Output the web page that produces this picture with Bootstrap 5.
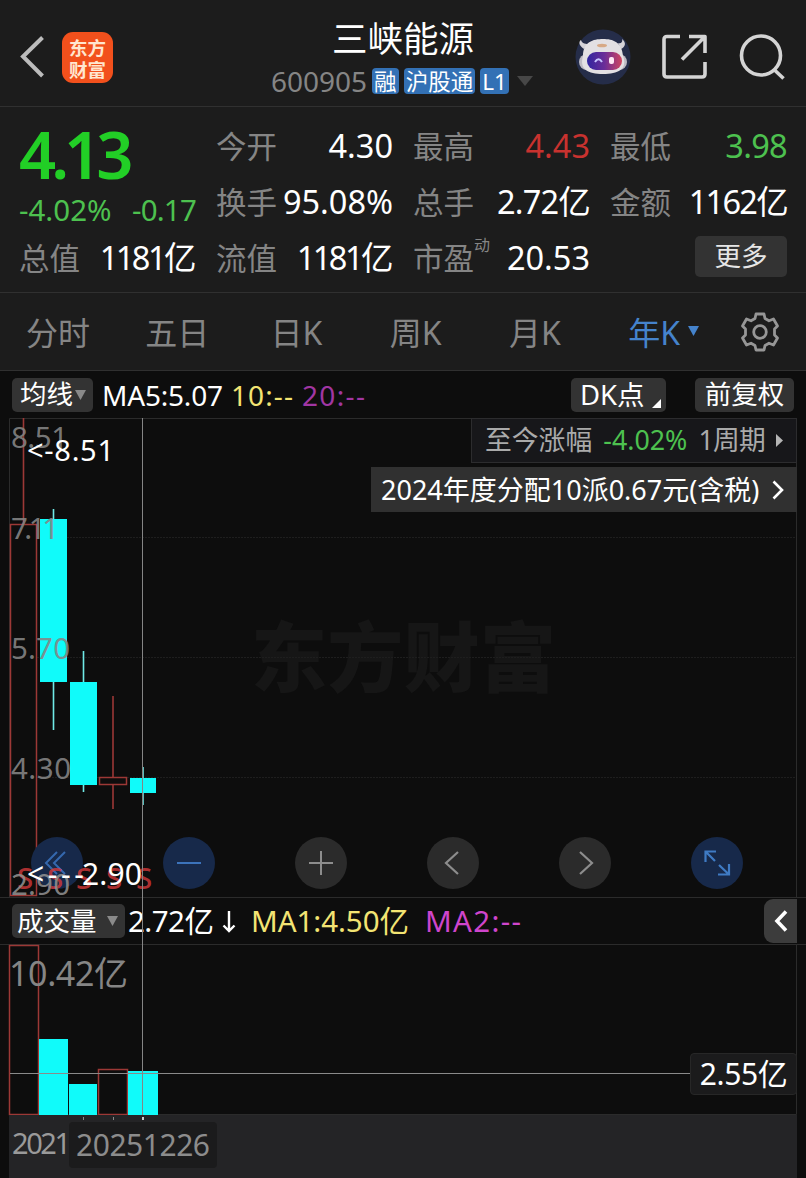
<!DOCTYPE html>
<html lang="zh-CN">
<head>
  <meta charset="UTF-8">
  <title>三峡能源 600905</title>
  <meta name="viewport" content="width=device-width, initial-scale=1">

  <!-- Bootstrap CSS -->
  <link href="https://cdn.jsdelivr.net/npm/bootstrap@5.3.0/dist/css/bootstrap.min.css" rel="stylesheet">

  <style>
    body {
      background-color: #0d0d0d;
      color: #fff;
      font-family: "Noto Sans", "Noto Sans CJK SC", sans-serif;
      line-height: 1;
      width: 806px;
      height: 1178px;
      overflow: hidden;
      white-space: nowrap;
    }
    svg { display: block; flex-shrink: 0; overflow: visible; }
    .panel { background-color: #1c1c1c; border-bottom: 1px solid #303030; }
    .dim { color: #858585; }
    .up { color: #c8322f; }
    .down { color: #4dc14f; }
    .ma-yellow { color: #f3e473; }
    .ma-purple { color: #a136a3; }

    /* header */
    .topbar { height: 107px; padding: 0 21px 0 20px; }
    .logo {
      width: 51px; height: 51px; margin-left: 17px;
      border-radius: 11px; background-color: #f2501c; color: #ffe6cf;
      font-family: "Noto Sans CJK SC", sans-serif;
      font-size: 18.5px; line-height: 22px; font-weight: 700;
    }
    .title { width: 264px; margin-left: 158px; }
    .stock-name { font-size: 35.5px; line-height: 44px; padding-top: 1px; }
    .stock-code { font-size: 28px; }
    .code-row { padding-top: 7px; }
    .tag {
      height: 26px; line-height: 27px; border-radius: 4px; padding: 0 2px;
      background-color: #3371b5; font-size: 22.5px; margin-left: 5px;
    }

    /* quote */
    .quote {
      display: grid; height: 186px; padding: 11px 18px 0 19px;
      grid-template-columns: repeat(4, 177px); grid-template-rows: repeat(3, 56px);
      column-gap: 20px;
    }
    .quote > div { font-size: 30.5px; }
    .val { font-size: 32.500px; color: #fff; }
    .val.up { color: #c8322f; }
    .val.down { color: #4dc14f; letter-spacing: -.7px; }
    .last-price { grid-row: span 2; }
    .price { font-size: 65px; font-weight: 600; letter-spacing: -5px; color: #22cf26; line-height: 68px; padding-top: 2px; }
    .change { font-size: 29.500px; line-height: 36px; padding-top: 4px; }
    .t1 { letter-spacing: -.8px; }
    .t2 { letter-spacing: -1.7px; }
    .t3 { letter-spacing: -2.5px; padding-right: 2px; }
    .dyn { font-size: 16px; top: -19px; }
    .more-btn { width: 92px; height: 41px; border-radius: 5px; background-color: #333; font-size: 26.5px; color: #e6e6e6; }

    /* period tabs */
    .periods { height: 78px; font-size: 32px; }
    .periods > div { width: 119.2px; padding: 3px 3px 0 0; }
    .periods .active { color: #4583cc; }

    /* chart */
    .tools { height: 47px; padding: 0 12px; font-size: 28px; }
    .chip { height: 34px; border-radius: 5px; background-color: #333; font-size: 26.5px; }
    .since { top: 0; right: 9px; width: 326px; height: 45px; padding: 0 13px 0 13px; background-color: #17171a; border: 1px solid #2c2c2e; font-size: 26.8px; color: #aaa; }
    .notice { top: 49px; right: 9px; width: 426px; height: 45px; padding: 0 13px 0 10px; background-color: #303030; font-size: 27px; }
    .controls { top: 419px; left: 31px; gap: 80px; }
    .round-btn { width: 52px; height: 52px; background-color: #2b2b2b; }
    .round-btn.blue { background-color: #17294a; }
    .fold-btn { top: 1px; right: 9px; width: 33px; height: 44px; border-radius: 9px 0 0 9px; background-color: #3c3c3c; }
    .cross-v { left: 142px; top: 0; width: 1px; height: 697px; background-color: #858585; }
    .vol-tag { right: 9px; top: 108px; width: 107px; height: 42px; border-radius: 4px; background-color: #1b1b1c; border: 1px solid #272727; font-size: 30px; letter-spacing: -.4px; }
    .dates { height: 63px; margin: 0 9px; background-color: #242426; }
    .date-tag { left: 60px; top: 7px; width: 148px; height: 46px; border-radius: 4px; background-color: #1b1b1c; }
  </style>
</head>
<body>

<!-- HEADER -->
<header class="panel topbar d-flex position-relative">
  <div class="d-flex align-items-center pt-2">
    <svg width="25" height="44" viewBox="0 0 25 44" fill="none" stroke="#bcbcbc" stroke-width="4"><path d="M22.500 2.500L3 21.500L22.500 41"/></svg>
    <div class="logo text-center pt-1">东方<br>财富</div>
  </div>
  <div class="title">
    <div class="stock-name text-center pt-3">三峡能源</div>
    <div class="code-row d-flex align-items-center">
      <span class="stock-code dim">600905</span>
      <span class="tag">融</span>
      <span class="tag">沪股通</span>
      <span class="tag">L1</span>
      <svg class="ms-2" width="16" height="10"><path d="M0 0H16L8 10Z" fill="#474747"/></svg>
    </div>
  </div>
  <div class="d-flex align-items-center ms-auto pt-2">
    <svg width="56" height="56" viewBox="0 0 56 56">
      <defs>
        <linearGradient id="visor"><stop offset="0" stop-color="#3126a0"/><stop offset=".5" stop-color="#6b2d98"/><stop offset="1" stop-color="#d04560"/></linearGradient>
      </defs>
      <circle cx="28" cy="28" r="27.500" fill="#252d49"/>
      <path d="M9 20C3 16 4 12 6 11C7 15 11 15 15 15M43 14C46 15 48 13 47 10C52 14 50 18 46 20" fill="#d5d3d8"/>
      <rect x="4" y="25" width="48" height="16" rx="8" fill="#bebbc4"/>
      <path d="M8 27C8 13 18 10 28 10S47 13 48 27C53 40 43 45 28 45S4 40 8 27Z" fill="#e3e0e3"/>
      <ellipse cx="27" cy="16.500" rx="5" ry="1.800" fill="#d7a986"/>
      <rect x="12" y="23" width="35" height="18" rx="9" fill="url(#visor)"/>
      <path d="M20 33Q23.500 27.500 27 33" fill="none" stroke="#c6c5ff" stroke-width="2"/>
      <rect x="34" y="28" width="5" height="7" rx="2" fill="#ffe8f4"/>
    </svg>
    <svg style="margin-left:31px" width="45" height="46" viewBox="0 0 45 46" fill="none" stroke="#d4d4d4" stroke-width="3.600" stroke-linejoin="round"><path d="M18 2.500H5Q2 2.500 2 5.500V40Q2 43 5 43H40Q43 43 43 40V28M27 2.500H43V19M43 2.500L20 25.500"/></svg>
    <svg style="margin-left:32px" width="46" height="46" viewBox="0 0 46 46" fill="none" stroke="#d4d4d4" stroke-width="3.600"><circle cx="22" cy="21.500" r="19.500"/><path d="M35 35.500L44.500 44.500"/></svg>
  </div>
</header>

<!-- QUOTE -->
<section class="panel quote dim">
  <div class="last-price down">
    <div class="price">4.13</div>
    <div class="change d-flex justify-content-between"><span>-4.02%</span><span class="t1">-0.17</span></div>
  </div>
  <div class="d-flex align-items-center justify-content-between">今开<span class="val">4.30</span></div>
  <div class="d-flex align-items-center justify-content-between">最高<span class="val up">4.43</span></div>
  <div class="d-flex align-items-center justify-content-between">最低<span class="val down">3.98</span></div>
  <div class="d-flex align-items-center justify-content-between">换手<span class="val">95.08%</span></div>
  <div class="d-flex align-items-center justify-content-between">总手<span class="val t1">2.72亿</span></div>
  <div class="d-flex align-items-center justify-content-between">金额<span class="val t2">1162亿</span></div>
  <div class="d-flex align-items-center justify-content-between">总值<span class="val t3">1181亿</span></div>
  <div class="d-flex align-items-center justify-content-between">流值<span class="val t3">1181亿</span></div>
  <div class="d-flex align-items-center justify-content-between">
    <span>市盈<span class="dyn position-relative">动</span></span><span class="val">20.53</span>
  </div>
  <div class="d-flex align-items-center justify-content-end">
    <div class="more-btn d-flex align-items-center justify-content-center mb-1">更多</div>
  </div>
</section>

<!-- PERIODS -->
<nav class="panel periods dim d-flex align-items-center text-center">
  <div>分时</div>
  <div>五日</div>
  <div>日K</div>
  <div>周K</div>
  <div>月K</div>
  <div class="active position-relative">年K<svg class="position-absolute" style="left:92px;top:12px" width="11" height="10"><path d="M0 0H11L5.500 10Z" fill="#4583cc"/></svg></div>
  <svg class="ms-auto" style="margin-right:25px" width="42" height="42" viewBox="-21 -21 42 42" fill="none" stroke="#969696" stroke-width="2.800" stroke-linejoin="round">
    <path d="M-4 -18H4L5 -13.500L9 -11.200L13.500 -13L17.500 -6L14.500 -3V3L17.500 6L13.500 13L9 11.200L5 13.500L4 18H-4L-5 13.500L-9 11.200L-13.500 13L-17.500 6L-14.500 3V-3L-17.500 -6L-13.500 -13L-9 -11.200L-5 -13.500Z"/>
    <circle r="6.300"/>
  </svg>
</nav>

<!-- MA LINE -->
<div class="tools d-flex align-items-center">
  <div class="chip d-flex align-items-center ps-2" style="width:81px">均线<svg style="margin-left:2px" width="11" height="10"><path d="M0 0H11L5.500 10Z" fill="#8a8a8a"/></svg></div>
  <svg width="270" height="34">
    <text x="9" y="28" fill="#fff" textLength="121">MA5:5.07</text>
    <text x="138" y="28" fill="#f3e473" textLength="62">10:--</text>
    <text x="209" y="28" fill="#a136a3" textLength="63">20:--</text>
  </svg>
  <div class="chip d-flex align-items-center ms-auto position-relative" style="width:95px;padding-left:9px;font-size:27.500px">DK点<svg class="position-absolute" style="right:5px;bottom:4px" width="9" height="9"><path d="M9 0V9H0Z" fill="#fff"/></svg></div>
  <div class="chip d-flex align-items-center justify-content-center" style="width:99px;margin-left:29px">前复权</div>
</div>

<!-- CHART -->
<main class="position-relative">
  <div class="position-relative">
    <svg width="806" height="479" viewBox="0 418 806 479">
      <text x="251" y="686" font-size="76" font-weight="900" fill="#161616" textLength="305">东方财富</text>
      <path d="M10 537.500H796M10 657.500H796M10 777.500H796" stroke="#1e1e1e" stroke-dasharray="2 1"/>
      <path d="M9.500 897V418.500H796.500V897" fill="none" stroke="#2b2b2b"/>
      <g id="candles"></g>
      <g font-size="29.500" fill="#858585" fill-opacity=".9">
        <text x="11" y="448" textLength="57">8.51</text>
        <text x="11" y="539" textLength="48">7.11</text>
        <text x="11" y="659" textLength="59">5.70</text>
        <text x="11" y="779" textLength="60">4.30</text>
      </g>
      <text x="27" y="461" font-size="29" fill="#fff" textLength="87">&lt;-8.51</text>
    </svg>
    <div class="since position-absolute d-flex align-items-center justify-content-between">
      <span>至今涨幅</span><span class="down">-4.02%</span><span class="t1">1周期</span>
      <svg width="7" height="13"><path d="M0 0L7 6.500L0 13Z" fill="#b5b5b5"/></svg>
    </div>
    <div class="notice position-absolute d-flex align-items-center justify-content-between">
      <span>2024年度分配10派0.67元(含税)</span>
      <svg width="12" height="20" viewBox="0 0 12 20" fill="none" stroke="#fff" stroke-width="2.600"><path d="M1.500 1.500L10 10L1.500 18.500"/></svg>
    </div>
    <div class="controls position-absolute d-flex">
      <div class="round-btn blue rounded-circle"><svg width="52" height="52" fill="none" stroke="#3568ae" stroke-width="2"><path d="M26 15L15 26L26 37M34 15L23 26L34 37"/></svg></div>
      <div class="round-btn blue rounded-circle"><svg width="52" height="52" stroke="#3c73bb" stroke-width="2"><path d="M14 26H38"/></svg></div>
      <div class="round-btn rounded-circle"><svg width="52" height="52" stroke="#8d8d8d" stroke-width="2"><path d="M14 26H38M26 14V38"/></svg></div>
      <div class="round-btn rounded-circle"><svg width="52" height="52" fill="none" stroke="#8d8d8d" stroke-width="2.200"><path d="M31 15L19 26L31 37"/></svg></div>
      <div class="round-btn rounded-circle"><svg width="52" height="52" fill="none" stroke="#8d8d8d" stroke-width="2.200"><path d="M21 15L33 26L21 37"/></svg></div>
      <div class="round-btn blue rounded-circle"><svg width="52" height="52" fill="none" stroke="#3f7bc4" stroke-width="2.200"><path d="M14.500 25V14.500H25M14.500 14.500L24 24M38 27V37.500H27M38 37.500L28 28"/></svg></div>
    </div>
    <!-- low marks lie over the round buttons -->
    <svg class="position-absolute top-0 start-0 pe-none" width="160" height="479" viewBox="0 418 160 479">
      <g font-size="29.500" font-weight="500" fill="#d8393a" fill-opacity=".8" text-anchor="middle">
        <text x="25" y="889">S</text><text x="55" y="889">S</text><text x="84" y="889">S</text><text x="114" y="889">S</text><text x="144" y="889">S</text>
      </g>
      <text x="11" y="895" font-size="29.500" fill="#8f8f8f" fill-opacity=".9" textLength="59">2.90</text>
      <text x="27" y="885" font-size="30" fill="#fff" textLength="57">&lt;---</text>
      <text x="82" y="885" font-size="30" fill="#fff" textLength="60">2.90</text>
    </svg>
  </div>

  <div class="tools border-top border-bottom d-flex align-items-center position-relative" style="--bs-border-color:#2b2b2b;height:48px">
    <div class="chip d-flex align-items-center" style="width:113px;padding-left:5px">成交量<svg style="margin-left:10px" width="11" height="10"><path d="M0 0H11L5.500 10Z" fill="#8a8a8a"/></svg></div>
    <svg width="400" height="46" font-size="29.500">
      <text x="3" y="34" fill="#fff" textLength="86">2.72亿</text>
      <path d="M104 13V33M98.500 27.500L104 33L109.500 27.500" fill="none" stroke="#fff" stroke-width="2.400"/>
      <text x="126" y="34" fill="#f3e473" textLength="158">MA1:4.50亿</text>
      <text x="300" y="34" fill="#cf45cc" textLength="96">MA2:--</text>
    </svg>
    <div class="fold-btn position-absolute d-flex align-items-center justify-content-center">
      <svg width="14" height="22" viewBox="0 0 14 22" fill="none" stroke="#fff" stroke-width="3.600"><path d="M12 1.500L3 11L12 20.500"/></svg>
    </div>
  </div>

  <div class="position-relative">
    <svg width="806" height="170" viewBox="0 945 806 170">
      <path d="M9.500 945V1114.500H796.500V945" fill="none" stroke="#2b2b2b"/>
      <g id="volumes"></g>
      <path d="M10 1073.500H691" stroke="#8a8a8a"/>
      <text x="9" y="986" font-size="34" fill="#858585" textLength="119">10.42亿</text>
    </svg>
    <div class="vol-tag position-absolute d-flex align-items-center justify-content-center">2.55亿</div>
  </div>
  <div class="cross-v position-absolute"></div>

  <div class="dates position-relative">
    <svg width="788" height="63" viewBox="9 1115 788 63">
      <path d="M83.500 1117V1120M113.500 1117V1120" stroke="#888"/>
      <path d="M143 1117V1120" stroke="#ccc" stroke-width="2"/>
      <text x="12" y="1154" font-size="29" fill="#9a9a9a" textLength="59">2021</text>
    </svg>
    <div class="date-tag position-absolute">
      <svg width="148" height="46"><text x="7" y="34" font-size="30" fill="#8c8c8c" textLength="134">20251226</text></svg>
    </div>
  </div>
</main>

<!-- Bootstrap JS -->
<script src="https://cdn.jsdelivr.net/npm/bootstrap@5.3.0/dist/js/bootstrap.bundle.min.js"></script>

<script>
  // x, width, body top, body bottom, high, low, rising
  const candles = [
    [10, 27, 524, 896, 418, 896, true],
    [40, 27, 519, 682, 509, 730, false],
    [70, 27, 682, 785, 651, 792, false],
    [99, 28, 777, 785, 696, 809, true],
    [130, 26, 778, 793, 767, 805, false]
  ];
  // x, width, top, rising
  const volumes = [
    [9, 30, 945, true],
    [39, 29, 1039, false],
    [69, 28, 1084, false],
    [98, 30, 1069, true],
    [128, 30, 1071, false]
  ];
  const red = "#9c3836";
  const cyan = "#10fbfa";

  function bar(x, y, w, h, rising) {
    return rising
      ? `<rect x="${x + .5}" y="${y + .5}" width="${w - 1}" height="${h - 1}" fill="#0d0d0d" stroke="${red}" stroke-width="1.500"/>`
      : `<rect x="${x}" y="${y}" width="${w}" height="${h}" fill="${cyan}"/>`;
  }

  document.getElementById("candles").innerHTML = candles.map(([x, w, top, bottom, high, low, rising]) => {
    const mid = x + w / 2;
    return `<path d="M${mid} ${high}V${low}" stroke="${rising ? red : "#6fe9e6"}" stroke-width="1.600"/>` +
      bar(x, top, w, bottom - top, rising);
  }).join("");

  document.getElementById("volumes").innerHTML = volumes
    .map(([x, w, top, rising]) => bar(x, top, w, 1115 - top, rising)).join("");
</script>

</body>
</html>
